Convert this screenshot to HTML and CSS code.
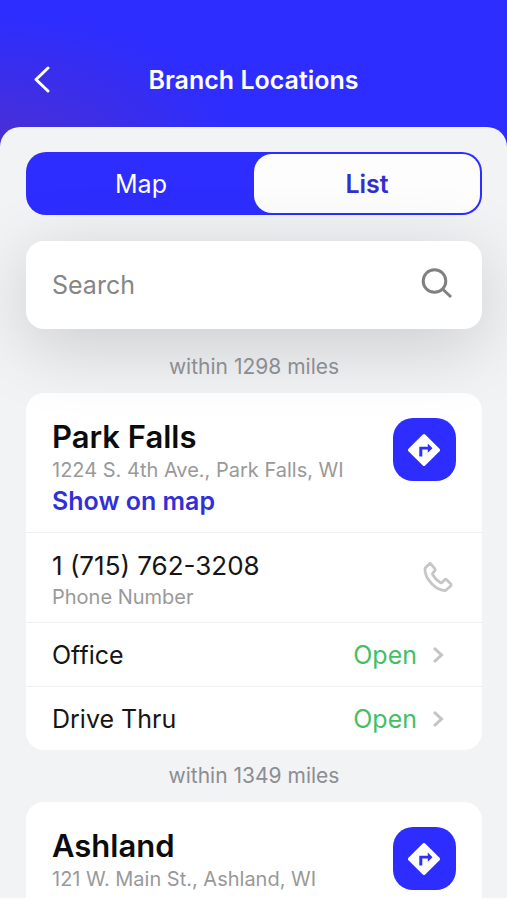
FILE: index.html
```html
<!DOCTYPE html>
<html lang="en">
<head>
<meta charset="utf-8">
<meta name="viewport" content="width=device-width, initial-scale=1">
<title>Branch Locations</title>
<link rel="stylesheet" href="styles.css">
</head>
<body>
<svg class="sprite" aria-hidden="true">
  <symbol id="directions" viewBox="0 0 34 34">
    <path fill="currentColor" d="M14.800 1.500a1.700 1.700 0 0 1 2.400 0l14.300 14.300a1.700 1.700 0 0 1 0 2.400l-14.300 14.300a1.700 1.700 0 0 1-2.400 0l-14.300-14.300a1.700 1.700 0 0 1 0-2.400z"/>
    <path fill="#2d2dff" d="M11.300 23.600V13.700h8.500v-3.100l4.700 4.600-4.700 4.600v-3.200h-5.500v7z"/>
  </symbol>
  <symbol id="chevron" viewBox="0 0 12 18">
    <path d="M2 2l7.500 7L2 16" fill="none" stroke="currentColor" stroke-width="3"/>
  </symbol>
</svg>
<div class="app">
  <header class="header">
    <button class="back" type="button" aria-label="Back">
      <svg width="18" height="28" viewBox="0 0 18 28"><path d="M15 2L3 13.500l12 11.500" fill="none" stroke="currentColor" stroke-width="3" stroke-linecap="round" stroke-linejoin="round"/></svg>
    </button>
    <h1 class="title">Branch Locations</h1>
  </header>
  <main class="panel">
    <div class="tabs">
      <button class="tab" type="button" aria-pressed="false">Map</button>
      <button class="tab tab-active" type="button" aria-pressed="true">List</button>
    </div>
    <form class="search">
      <input class="search-input" type="search" placeholder="Search" aria-label="Search">
      <button class="search-button" type="submit" aria-label="Search">
        <svg width="32" height="34" viewBox="0 0 32 34"><g fill="none" stroke="currentColor" stroke-width="3"><circle cx="13.500" cy="13" r="11.300"/><path d="M21.500 21l8.500 8"/></g></svg>
      </button>
    </form>
    <section>
      <p class="distance">within 1298 miles</p>
      <article class="card">
        <div class="card-head">
          <div>
            <h2 class="name">Park Falls</h2>
            <p class="small">1224 S. 4th Ave., Park Falls, WI</p>
            <a class="map-link" href="#map">Show on map</a>
          </div>
          <button class="directions" type="button" aria-label="Directions to Park Falls"><svg width="34" height="34"><use href="#directions"/></svg></button>
        </div>
        <a class="row phone" href="tel:17157623208">
          <span class="phone-text"><span class="number">1 (715) 762-3208</span><span class="small">Phone Number</span></span>
          <svg width="32" height="34" viewBox="0 0 32 34"><path d="M7.500 2.700L3 7.200C2.500 13 6 19 10 23c4 4 9 6.500 13.500 6.500l5.500-4.700v-1.600L24.500 18.500c-.5-.4-1-.4-1.500 0l-3 3c-.6.500-1.200.4-1.800 0-3.200-2-5.700-4.500-7.500-7.700-.4-.6-.4-1.200 0-1.700L13 9.500c.4-.5.400-1 0-1.500L8.800 2.800c-.4-.4-.9-.4-1.300-.1z" fill="none" stroke="currentColor" stroke-width="2.800" stroke-linejoin="round"/></svg>
        </a>
        <a class="row" href="#office"><span>Office</span><span class="status">Open<svg class="chevron" width="12" height="18"><use href="#chevron"/></svg></span></a>
        <a class="row" href="#drive-thru"><span>Drive Thru</span><span class="status">Open<svg class="chevron" width="12" height="18"><use href="#chevron"/></svg></span></a>
      </article>
    </section>
    <section>
      <p class="distance">within 1349 miles</p>
      <article class="card">
        <div class="card-head">
          <div>
            <h2 class="name">Ashland</h2>
            <p class="small">121 W. Main St., Ashland, WI</p>
          </div>
          <button class="directions" type="button" aria-label="Directions to Ashland"><svg width="34" height="34"><use href="#directions"/></svg></button>
        </div>
      </article>
    </section>
  </main>
</div>
</body>
</html>
```
FILE: styles.css
```css
* { box-sizing: border-box; }
body, h1, h2, p { margin: 0; }
body {
  background: #fff;
  color: #151515;
  font: 400 25px/32px Inter, "Liberation Sans", sans-serif;
}
button, input { font: inherit; }
button { border: 0; padding: 0; cursor: pointer; }
a { color: inherit; text-decoration: none; }
svg { display: block; flex: none; }
.sprite { position: absolute; width: 0; height: 0; }
.app {
  height: 100vh;
  overflow: hidden;
  border-bottom: 2px solid #fff;
  background: radial-gradient(240px 140px at 0 155px, #4c2fd0, #2d2dff);
}
.header {
  display: grid;
  grid-template-columns: 32px 1fr 32px;
  align-items: center;
  padding: 60px 26px 27px;
  color: #fff;
}
.back {
  display: grid;
  place-items: center;
  height: 40px;
  background: none;
  color: inherit;
}
.title {
  font-size: 25px;
  line-height: 40px;
  font-weight: 600;
  text-align: center;
}
.panel {
  padding: 25px 25px 25px 26px;
  background: #f2f3f5;
  border-radius: 20px 20px 0 0;
  min-height: 100vh;
}
.tabs {
  display: grid;
  grid-template-columns: 1fr 1fr;
  height: 63px;
  padding: 2px;
  margin-bottom: 26px;
  background: #2d2dff;
  border-radius: 20px;
}
.tab {
  background: none;
  color: #fff;
}
.tab-active {
  background: #fdfdfd;
  color: #322fd0;
  font-weight: 600;
  border-radius: 18px;
}
.search {
  position: relative;
  z-index: 1;
  display: flex;
  align-items: center;
  height: 88px;
  margin-bottom: 12px;
  padding: 0 29px 0 26px;
  background: #fff;
  border-radius: 18px;
  box-shadow: 0 16px 72px rgba(0, 0, 0, 0.17);
}
.search-input {
  flex: 1;
  min-width: 0;
  padding: 0;
  border: 0;
  outline: 0;
  background: none;
  color: inherit;
}
.search-input::placeholder { color: #858585; opacity: 1; }
.search-button {
  background: none;
  color: #808080;
}
.distance {
  position: relative;
  z-index: 2;
  padding: 10px 0;
  color: #8c8d92;
  font-size: 21px;
  text-align: center;
}
.card {
  background: #fff;
  border-radius: 18px;
}
.card-head {
  display: flex;
  justify-content: space-between;
  padding: 25px 26px 14px;
  min-height: 139px;
}
.name {
  font-size: 31px;
  line-height: 38px;
  font-weight: 600;
  color: #0c0c0c;
}
.small {
  display: block;
  color: #999;
  font-size: 20px;
  line-height: 28px;
}
.map-link {
  display: block;
  line-height: 34px;
  color: #322fd8;
  font-weight: 600;
}
.directions {
  display: grid;
  place-items: center;
  flex: none;
  width: 63px;
  height: 63px;
  border-radius: 20px;
  background: #2d2dff;
  color: #fff;
}
.row {
  display: flex;
  align-items: center;
  justify-content: space-between;
  min-height: 64px;
  padding: 0 38px 0 26px;
  border-top: 1px solid #efeff1;
}
.phone {
  min-height: 90px;
  padding-right: 28px;
  color: #c6c6c6;
}
.phone-text { padding-top: 4px; }
.number {
  display: block;
  font-size: 26px;
  line-height: 34px;
  color: #151515;
}
.status {
  display: flex;
  align-items: center;
  gap: 15px;
  color: #43bf65;
}
.chevron { color: #c4c4c4; }
```
